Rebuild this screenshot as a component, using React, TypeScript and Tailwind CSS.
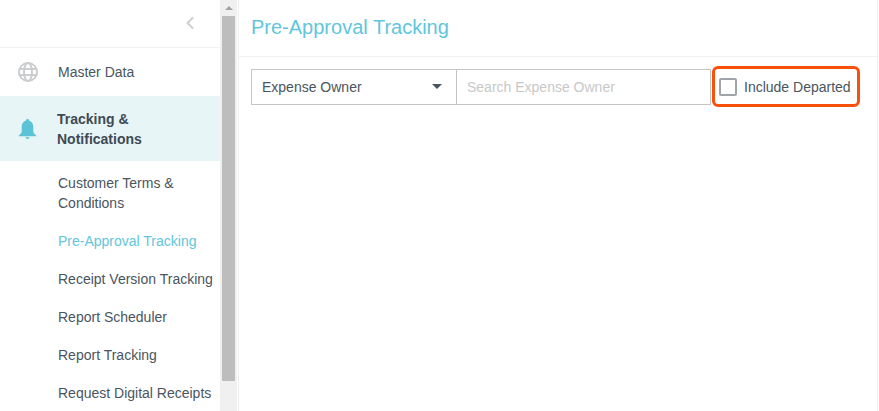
import React from 'react';
import { ChevronLeft } from 'lucide-react';

const subItems = [
  { label: 'Customer Terms & Conditions' },
  { label: 'Pre-Approval Tracking', active: true },
  { label: 'Receipt Version Tracking' },
  { label: 'Report Scheduler' },
  { label: 'Report Tracking' },
  { label: 'Request Digital Receipts' },
];

function Sidebar() {
  return (
    <div className="w-[220px] h-full shrink-0 overflow-hidden bg-white">
      <div className="h-[48px] flex items-center justify-end pr-[20px] pb-[1px] border-b border-[#f2f2f2]">
        <ChevronLeft size={20} strokeWidth={2.6} className="text-[#cdd2d6]" />
      </div>
      <div className="h-[48px] flex items-center pl-[18px]">
        <svg width="20" height="20" viewBox="0 0 20 20" fill="none" stroke="#cbcdcf" strokeWidth="2" className="shrink-0">
          <circle cx="10" cy="10" r="9" />
          <ellipse cx="10" cy="10" rx="4" ry="9" />
          <path d="M1.5 7H18.5M1.5 13H18.5" />
        </svg>
        <span className="ml-[20px] text-sm text-[#4a5560]">Master Data</span>
      </div>
      <div className="h-[65px] flex items-center pl-[18px] bg-[#e8f5f7]">
        <svg width="19" height="22" viewBox="0 0 19 22" className="shrink-0">
          <path d="M9.5 1C10.5 1 11 1.7 11 2.6C14 3.4 15.3 6 15.3 9V13.5C15.3 15 16.6 16.2 18.2 17.6V18.2H0.8V17.6C2.4 16.2 3.7 15 3.7 13.5V9C3.7 6 5 3.4 8 2.6C8 1.7 8.5 1 9.5 1Z" fill="#5cc3d7" />
          <path d="M7.4 19.3H11.6C11.4 20.4 10.6 21 9.5 21C8.4 21 7.6 20.4 7.4 19.3Z" fill="#5cc3d7" />
        </svg>
        <span className="ml-[20px] text-sm font-bold leading-[20px] text-[#3f4a55] w-[120px]">Tracking &amp; Notifications</span>
      </div>
      <div className="pt-[3px] pl-[58px] flex flex-col">
        {subItems.map((item) => (
          <div
            key={item.label}
            className={`py-[9px] text-sm leading-[20px] whitespace-normal ${item.active ? 'text-[#62c6da]' : 'text-[#4a5560]'}`}
          >
            {item.label}
          </div>
        ))}
      </div>
    </div>
  );
}

function Scrollbar() {
  return (
    <div className="w-[17px] h-full shrink-0 bg-[#f0f0f0] flex flex-col items-center">
      <div className="h-[16px] flex items-center justify-center">
        <div className="w-0 h-0 border-x-[4px] border-x-transparent border-b-[4px] border-b-[#a3a3a3]" />
      </div>
      <div className="w-[13px] h-[365px] bg-[#bdbdbd]" />
    </div>
  );
}

export default function App() {
  return (
    <div className="w-[879px] h-[411px] flex bg-white overflow-hidden font-['Liberation_Sans',Arial,sans-serif]">
      <Sidebar />
      <Scrollbar />
      <div className="flex-1 min-w-0 h-full ml-[1px] border-l border-r border-[#eeeeee] mr-[1px]">
        <div className="h-[57px] flex items-center pl-[12px] pb-[3px] border-b border-[#f2f2f2]">
          <h1 className="text-xl text-[#62c6da]">Pre-Approval Tracking</h1>
        </div>
        <div className="pt-[9px] pl-[12px] flex items-center">
          <div className="w-[206px] h-[36px] flex items-center justify-between pl-[10px] pr-[14px] border border-[#c4c4c4] text-sm text-[#4a5560]">
            <span>Expense Owner</span>
            <div className="w-0 h-0 border-x-[5px] border-x-transparent border-t-[5px] border-t-[#4a5560]" />
          </div>
          <input
            readOnly
            placeholder="Search Expense Owner"
            className="w-[255px] h-[36px] -ml-[1px] pl-[10px] border border-[#c4c4c4] text-sm outline-none placeholder:text-[#c8c8c8]"
          />
          <label className="ml-[1px] w-[148px] h-[41px] flex items-center pl-[4px] border-[3px] border-[#f9500c] rounded-[6px] text-sm text-[#4a5560]">
            <span className="w-[18px] h-[18px] border-2 border-[#a0a4a8] rounded-[2px]" />
            <span className="ml-[7px]">Include Departed</span>
          </label>
        </div>
      </div>
    </div>
  );
}
